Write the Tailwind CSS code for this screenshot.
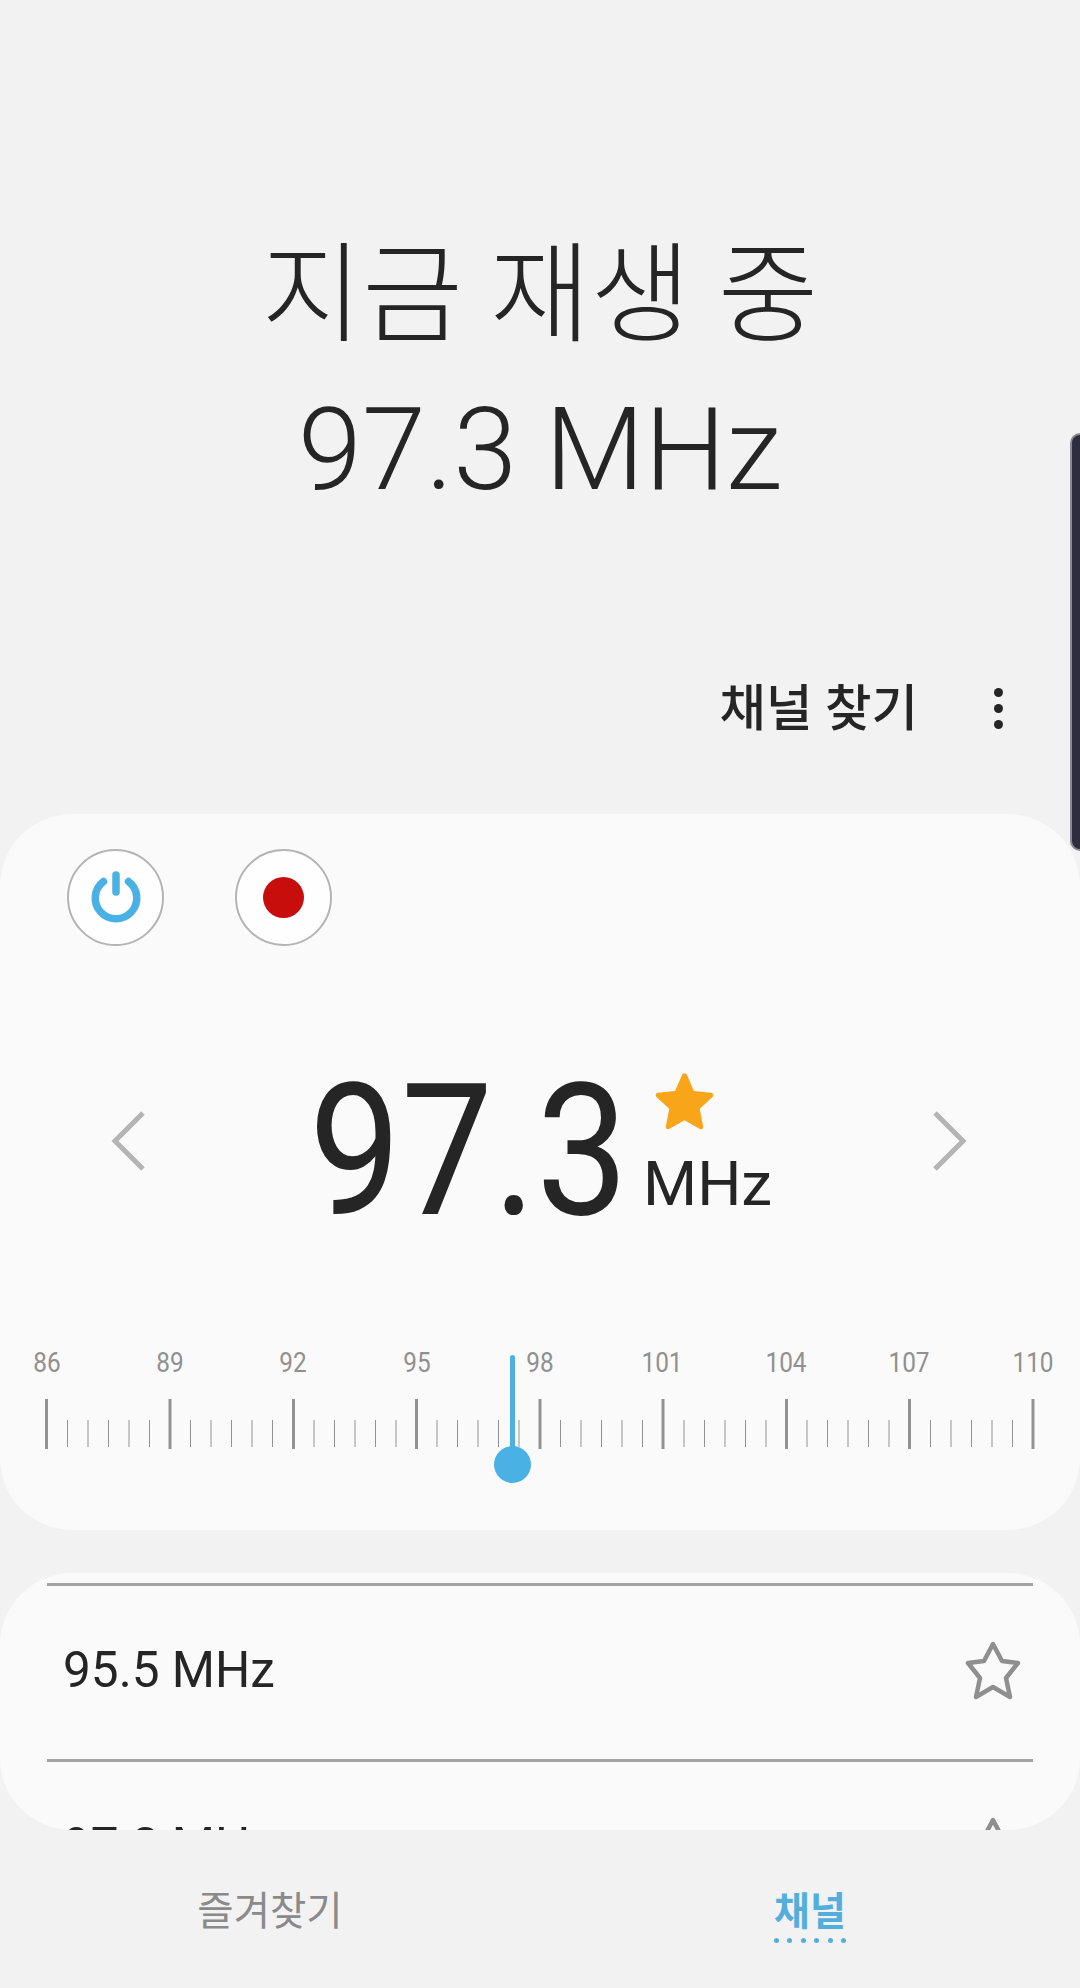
<!DOCTYPE html>
<html><head><meta charset="utf-8"><script src="https://cdn.jsdelivr.net/npm/@tailwindcss/browser@4"></script></head>
<body class="m-0">
<div class="relative w-[1080px] h-[1988px] overflow-hidden bg-[#f2f2f2] flex flex-col text-[#252525] font-['Roboto','Noto_Sans_CJK_KR',sans-serif]">
  <header class="h-[814px] shrink-0 flex flex-col items-center">
    <h1 class="mt-[230px] text-[109.5px] leading-[132px] font-light">지금 재생 중</h1>
    <p class="mt-[13px] text-[115px] leading-[150px] font-light">97.3 MHz</p>
    <div class="self-end mt-[154px] flex items-center pr-[77px]">
      <span class="text-[50.5px] leading-[60px] font-medium">채널 찾기</span>
      <span class="ml-[76px] flex flex-col gap-[7px] -translate-y-[1px]">
        <i class="block w-[9px] h-[9px] rounded-full bg-[#252525]"></i><i class="block w-[9px] h-[9px] rounded-full bg-[#252525]"></i><i class="block w-[9px] h-[9px] rounded-full bg-[#252525]"></i>
      </span>
    </div>
  </header>

  <section class="relative h-[716px] shrink-0 rounded-[72px] bg-[#fafafa]">
    <div class="absolute left-[67px] top-[35px] flex gap-[71px]">
      <button class="w-[97px] h-[97px] rounded-full border-2 border-[#b4b4b4] bg-[#fefefe] flex items-center justify-center">
        <svg width="56" height="56" viewBox="0 0 56 56" fill="none" stroke="#4ab1e5" stroke-linecap="round" stroke-width="7.5"><path d="M15.5 11.5A20.75 20.75 0 1 0 40.5 11.5"/><path d="M28 5V22"/></svg>
      </button>
      <button class="w-[97px] h-[97px] rounded-full border-2 border-[#b4b4b4] bg-[#fefefe] flex items-center justify-center">
        <span class="block w-[41px] h-[41px] rounded-full bg-[#c80d0d]"></span>
      </button>
    </div>
    <svg class="absolute left-[108px] top-[296px]" width="40" height="62" viewBox="0 0 40 62" fill="none" stroke="#b4b4b4" stroke-width="5"><path d="M35 3L7 31L35 59"/></svg>
    <svg class="absolute left-[930px] top-[296px]" width="40" height="62" viewBox="0 0 40 62" fill="none" stroke="#b4b4b4" stroke-width="5"><path d="M5 3L33 31L5 59"/></svg>

    <div class="absolute left-[309px] top-[237px] text-[184px] leading-[200px] whitespace-nowrap origin-left scale-x-[.89]">97.3</div>
    <div class="absolute left-[643px] top-[330px] text-[62px] leading-[80px]">MHz</div>
    <svg class="absolute left-[652.5px] top-[256px]" width="63" height="63" viewBox="0 0 24 24" fill="#f9a51a"><path d="M12 1.2c.5 0 .8.3 1 .8l2.6 6 6.4.7c1 .1 1.3 1 .6 1.7l-4.8 4.4 1.3 6.6c.2.9-.6 1.5-1.4 1l-5.7-3.3-5.7 3.3c-.8.5-1.6-.1-1.4-1l1.3-6.6L1.4 10.4c-.7-.7-.4-1.6.6-1.7l6.4-.7L11 2c.2-.5.5-.8 1-.8z"/></svg>

    <div class="absolute left-0 top-[534px] w-full h-[30px] text-[28px] leading-[30px] text-[#909090]">
      <span class="absolute left-[47px] -translate-x-1/2 scale-x-[.87]">86</span>
      <span class="absolute left-[170px] -translate-x-1/2 scale-x-[.87]">89</span>
      <span class="absolute left-[293px] -translate-x-1/2 scale-x-[.87]">92</span>
      <span class="absolute left-[417px] -translate-x-1/2 scale-x-[.87]">95</span>
      <span class="absolute left-[540px] -translate-x-1/2 scale-x-[.87]">98</span>
      <span class="absolute left-[662px] -translate-x-1/2 scale-x-[.87]">101</span>
      <span class="absolute left-[786px] -translate-x-1/2 scale-x-[.87]">104</span>
      <span class="absolute left-[909px] -translate-x-1/2 scale-x-[.87]">107</span>
      <span class="absolute left-[1033px] -translate-x-1/2 scale-x-[.87]">110</span>
    </div>
    <svg class="absolute left-0 top-[585px]" width="1080" height="50" viewBox="0 0 1080 50" fill="none" stroke="#929292">
      <path stroke-width="3" d="M46.5 0V50M170 0V50M293.5 0V50M416.5 0V50M540 0V50M663 0V50M786.5 0V50M909.5 0V50M1033 0V50"/>
      <path stroke-width="1" d="M67.5 21V48M88 21V48M108.5 21V48M129 21V48M149.5 21V48M190.5 21V48M211 21V48M231.5 21V48M252 21V48M272.5 21V48M314 21V48M334.5 21V48M355 21V48M375.5 21V48M396 21V48M437 21V48M457.5 21V48M478 21V48M498.5 21V48M519 21V48M560.5 21V48M581 21V48M601.5 21V48M622 21V48M642.5 21V48M684 21V48M704.5 21V48M725 21V48M745.5 21V48M766 21V48M807 21V48M827.5 21V48M848 21V48M868.5 21V48M889 21V48M930.5 21V48M951 21V48M971.5 21V48M992 21V48M1012.5 21V48"/>
    </svg>
    <div class="absolute left-[509.5px] top-[541px] w-[5px] h-[110px] rounded-full bg-[#4fafe0]"></div>
    <div class="absolute left-[494px] top-[632px] w-[37px] h-[37px] rounded-full bg-[#4ab1e5]"></div>
  </section>

  <section class="relative mt-[43px] h-[257px] shrink-0 rounded-[72px] bg-[#fafafa] overflow-hidden">
    <div class="absolute left-[47px] right-[47px] top-[10px] h-[3px] bg-[#a3a3a3]"></div>
    <div class="absolute left-[63px] top-[69px] text-[49.5px] leading-[56px]">95.5 MHz</div>
    <svg class="absolute left-[963px] top-[67px]" width="60" height="60" viewBox="0 0 60 60" fill="none" stroke="#8f8f8f" stroke-width="4.5" stroke-linejoin="round"><path d="M30 4L39 21L55 23L43 38L47 57L30 47L13 57L17 38L5 23L21 21Z"/></svg>
    <div class="absolute left-[47px] right-[47px] top-[186px] h-[3px] bg-[#a3a3a3]"></div>
    <div class="absolute left-[63px] top-[245px] text-[49.5px] leading-[56px]">97.3 MHz</div>
    <svg class="absolute left-[963px] top-[243px]" width="60" height="60" viewBox="0 0 60 60" fill="none" stroke="#8f8f8f" stroke-width="4.5" stroke-linejoin="round"><path d="M30 4L39 21L55 23L43 38L47 57L30 47L13 57L17 38L5 23L21 21Z"/></svg>
  </section>

  <nav class="grid grid-cols-2 flex-1">
    <div class="flex justify-center pt-[57px] text-[39.5px] leading-[50px] text-[#8a8a8a]">즐겨찾기</div>
    <div class="flex flex-col items-center pt-[57px]">
      <span class="text-[39px] leading-[50px] font-bold text-[#54aedb]">채널</span>
      <span class="mt-[1px] flex gap-[8.5px]"><i class="block w-[5px] h-[5px] rounded-full bg-[#54aedb]"></i><i class="block w-[5px] h-[5px] rounded-full bg-[#54aedb]"></i><i class="block w-[5px] h-[5px] rounded-full bg-[#54aedb]"></i><i class="block w-[5px] h-[5px] rounded-full bg-[#54aedb]"></i><i class="block w-[5px] h-[5px] rounded-full bg-[#54aedb]"></i><i class="block w-[5px] h-[5px] rounded-full bg-[#54aedb]"></i></span>
    </div>
  </nav>

  <div class="absolute right-0 top-[433px] w-[10px] h-[418px] rounded-l-[10px] bg-[#2d2d3f] border-l-2 border-y-2 border-[#8a8a90]"></div>
</div>
</body></html>
